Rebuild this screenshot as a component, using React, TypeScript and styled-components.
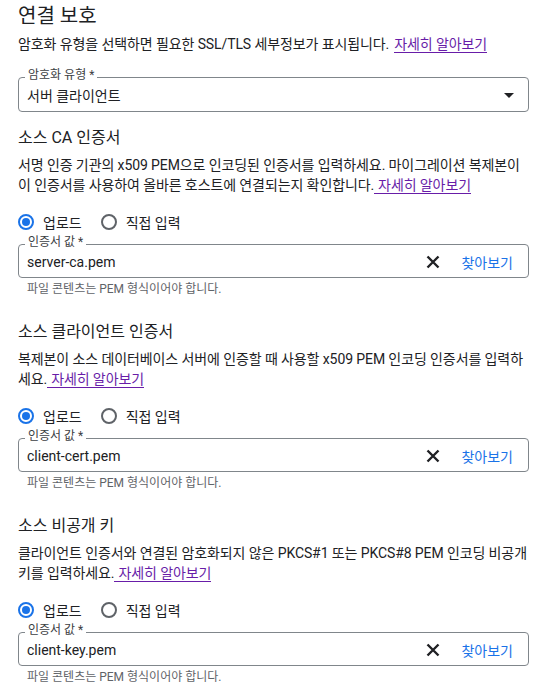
import styled, { createGlobalStyle } from 'styled-components';

const GlobalStyle = createGlobalStyle`
  body {
    margin: 0;
    background: #fff;
    color: #202124;
    font-family: Roboto, "Noto Sans CJK KR", sans-serif;
  }
`;

type Cert = {
  title: string;
  lines: string[];
  file: string;
};

const certs: Cert[] = [
  {
    title: '소스 CA 인증서',
    lines: [
      '서명 인증 기관의 x509 PEM으로 인코딩된 인증서를 입력하세요. 마이그레이션 복제본이',
      '이 인증서를 사용하여 올바른 호스트에 연결되는지 확인합니다.',
    ],
    file: 'server-ca.pem',
  },
  {
    title: '소스 클라이언트 인증서',
    lines: [
      '복제본이 소스 데이터베이스 서버에 인증할 때 사용할 x509 PEM 인코딩 인증서를 입력하',
      '세요.',
    ],
    file: 'client-cert.pem',
  },
  {
    title: '소스 비공개 키',
    lines: [
      '클라이언트 인증서와 연결된 암호화되지 않은 PKCS#1 또는 PKCS#8 PEM 인코딩 비공개',
      '키를 입력하세요.',
    ],
    file: 'client-key.pem',
  },
];

const CloseIcon = () => (
  <svg width="14" height="14" viewBox="0 0 14 14">
    <path d="M1.5 1.5L12.5 12.5M12.5 1.5L1.5 12.5" stroke="#202124" strokeWidth="2.4" />
  </svg>
);

const ArrowDropDown = () => (
  <svg width="24" height="24" viewBox="0 0 24 24" fill="#202124">
    <path d="M7 10l5 5 5-5z" />
  </svg>
);

const Radio = ({ checked, label }: { checked?: boolean; label: string }) => (
  <RadioItem>
    <RadioCircle $checked={checked} />
    {label}
  </RadioItem>
);

const CertSection = ({ cert }: { cert: Cert }) => (
  <Section>
    <SectionTitle>{cert.title}</SectionTitle>
    <Desc>
      {cert.lines.map((line, i) => (
        <span key={i}>
          {i > 0 && <br />}
          {line}
        </span>
      ))}
      <Link $pad>자세히 알아보기</Link>
    </Desc>
    <RadioRow>
      <Radio checked label="업로드" />
      <Radio label="직접 입력" />
    </RadioRow>
    <Field>
      <FieldLabel>인증서 값 *</FieldLabel>
      <FieldValue>{cert.file}</FieldValue>
      <ClearButton>
        <CloseIcon />
      </ClearButton>
      <Browse>찾아보기</Browse>
    </Field>
    <Helper>파일 콘텐츠는 PEM 형식이어야 합니다.</Helper>
  </Section>
);

const App = () => {
  return (
    <Page>
      <GlobalStyle />
      <Title>연결 보호</Title>
      <Desc>
        암호화 유형을 선택하면 필요한 SSL/TLS 세부정보가 표시됩니다.
        <Link>자세히 알아보기</Link>
      </Desc>
      <Field $select>
        <FieldLabel>암호화 유형 *</FieldLabel>
        <FieldValue>서버 클라이언트</FieldValue>
        <ArrowDropDown />
      </Field>
      {certs.map((c) => (
        <CertSection key={c.file} cert={c} />
      ))}
    </Page>
  );
};

export default App;

const Page = styled.div`
  width: 511px;
  padding: 4px 0 0 18px;
  display: flex;
  flex-direction: column;
`;

const Title = styled.div`
  font-size: 20px;
  line-height: 24px;
  margin-bottom: 6px;
`;

const Desc = styled.div`
  font-size: 14px;
  line-height: 20px;
  letter-spacing: -0.1px;
  white-space: nowrap;
  color: #202124;
`;

const Link = styled.a<{ $pad?: boolean }>`
  color: #681da8;
  text-decoration: none;
  border-bottom: 1px solid #681da8;
  margin-left: ${({ $pad }) => ($pad ? '0' : '5px')};
  padding-left: ${({ $pad }) => ($pad ? '4px' : '0')};
  cursor: pointer;
`;

const Section = styled.div`
  display: flex;
  flex-direction: column;
  margin-top: 14px;

  & + & {
    margin-top: 23px;
  }

  ${Desc} {
    margin-top: 5px;
  }
`;

const SectionTitle = styled.div`
  font-size: 16px;
  line-height: 24px;
`;

const RadioRow = styled.div`
  display: flex;
  align-items: center;
  gap: 19px;
  margin-top: 17px;
  height: 20px;
`;

const RadioItem = styled.label`
  display: flex;
  align-items: center;
  gap: 9px;
  font-size: 14px;
  color: #202124;
`;

const RadioCircle = styled.span<{ $checked?: boolean }>`
  width: 16px;
  height: 16px;
  box-sizing: border-box;
  border-radius: 50%;
  border: 2px solid ${({ $checked }) => ($checked ? '#1a73e8' : '#5f6368')};
  display: flex;
  align-items: center;
  justify-content: center;

  &::after {
    content: '';
    width: 8px;
    height: 8px;
    border-radius: 50%;
    background: ${({ $checked }) => ($checked ? '#1a73e8' : 'transparent')};
  }
`;

const Field = styled.div<{ $select?: boolean }>`
  position: relative;
  height: ${({ $select }) => ($select ? '35px' : '34px')};
  box-sizing: border-box;
  border: 1px solid #80868b;
  border-radius: 4px;
  display: flex;
  align-items: center;
  padding: 0 ${({ $select }) => ($select ? '7px' : '15px')} 0 8px;
  margin-top: ${({ $select }) => ($select ? '23px' : '12px')};
`;

const FieldLabel = styled.span`
  position: absolute;
  top: -10px;
  left: 6px;
  padding: 0 3px;
  background: #fff;
  font-size: 12px;
  line-height: 14px;
  color: #3c4043;
`;

const FieldValue = styled.span`
  flex: 1;
  font-size: 14px;
  padding-top: 1px;
  color: #202124;
`;

const ClearButton = styled.span`
  display: flex;
  align-items: center;
  margin-top: 2px;
  margin-right: 21px;
`;

const Browse = styled.span`
  font-size: 14px;
  padding-top: 1px;
  color: #1a73e8;
`;

const Helper = styled.div`
  font-size: 12px;
  line-height: 16px;
  color: #5f6368;
  padding-left: 9px;
  margin-top: 3px;
`;
